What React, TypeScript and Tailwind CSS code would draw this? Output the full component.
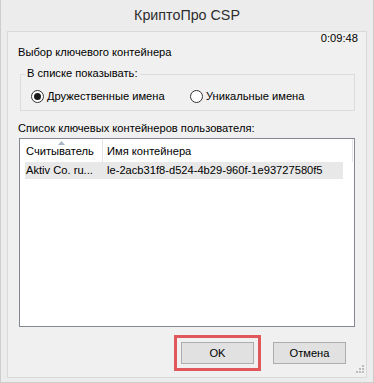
import React from "react";

function Radio({ checked, label }: { checked?: boolean; label: string }) {
  return (
    <div className="flex items-center">
      <div className="w-[13px] h-[13px] rounded-full border border-[#333333] bg-white flex items-center justify-center">
        {checked && <div className="w-[7px] h-[7px] rounded-full bg-[#1a1a1a]" />}
      </div>
      <span className="ml-[3px] leading-[14px]">{label}</span>
    </div>
  );
}

export default function App() {
  return (
    <div
      className="w-[374px] h-[383px] bg-[#ececec] border-x border-b border-[#cdcdcd] flex flex-col text-black text-[11.15px]"
      style={{ fontFamily: '"Liberation Sans", Arial, sans-serif' }}
    >
      <div className="h-[31px] flex items-center justify-center text-[14.3px] text-[#2e2e2e]">
        КриптоПро CSP
      </div>
      <div className="relative mx-[6px] h-[347px] bg-[#f0f0f0] border border-[#d9d9d9] flex flex-col">
        <div className="h-[12px] leading-[12px] text-right pr-[8px]">0:09:48</div>
        <div className="mt-[1px] h-[14px] leading-[14px] pl-[10px]">Выбор ключевого контейнера</div>

        <div className="relative mt-[15px] ml-[12px] w-[335px] h-[37px] border border-[#dcdcdc] pt-[14px] pl-[10px] flex">
          <span className="absolute left-[4px] top-[-9px] px-[2px] bg-[#f0f0f0] leading-[14px]">
            В списке показывать:
          </span>
          <div className="w-[159px] flex items-center h-[14px]">
            <Radio checked label="Дружественные имена" />
          </div>
          <div className="flex items-center h-[14px]">
            <Radio label="Уникальные имена" />
          </div>
        </div>

        <div className="mt-[10px] h-[14px] leading-[14px] pl-[10px]">
          Список ключевых контейнеров пользователя:
        </div>

        <div className="mt-[3px] ml-[11px] w-[336px] h-[189px] border border-[#828790] bg-white flex flex-col">
          <div className="relative h-[23px] flex">
            <svg className="absolute left-[38px] top-[2px]" width="7" height="4" viewBox="0 0 7 4">
              <path d="M0 4 L3.5 0 L7 4 Z" fill="#a7b4c6" />
            </svg>
            <div className="w-[82px] pl-[6px] pt-[5px] leading-[14px] whitespace-nowrap">Считыватель</div>
            <div className="w-[1px] h-full bg-[#e5e5e5]" />
            <div className="w-[249px] pl-[4px] pt-[5px] leading-[14px] whitespace-nowrap">Имя контейнера</div>
            <div className="w-[1px] h-full bg-[#e5e5e5]" />
          </div>
          <div className="ml-[5px] w-[318px] h-[17px] bg-[#e8e8e8] flex leading-[17px] whitespace-nowrap">
            <div className="w-[82px] pl-[1px]">Aktiv Co. ru...</div>
            <div>le-2acb31f8-d524-4b29-960f-1e93727580f5</div>
          </div>
        </div>

        <div className="mt-[8px] flex items-center justify-end pr-[20px]">
          <div className="border-[3px] border-[#e0585c] p-[4px]">
            <div className="w-[73px] h-[22px] bg-[#e1e1e1] border border-[#adadad] flex items-center justify-center">
              OK
            </div>
          </div>
          <div className="ml-[12px] w-[73px] h-[22px] bg-[#e1e1e1] border border-[#adadad] flex items-center justify-center">
            Отмена
          </div>
        </div>

        <svg className="absolute right-[2px] bottom-[4px]" width="8" height="8" viewBox="0 0 8 8">
          <rect x="6" y="0" width="2" height="2" fill="#bcbcbc" />
          <rect x="3" y="3" width="2" height="2" fill="#bcbcbc" />
          <rect x="6" y="3" width="2" height="2" fill="#bcbcbc" />
          <rect x="0" y="6" width="2" height="2" fill="#bcbcbc" />
          <rect x="3" y="6" width="2" height="2" fill="#bcbcbc" />
          <rect x="6" y="6" width="2" height="2" fill="#bcbcbc" />
        </svg>
      </div>
    </div>
  );
}
